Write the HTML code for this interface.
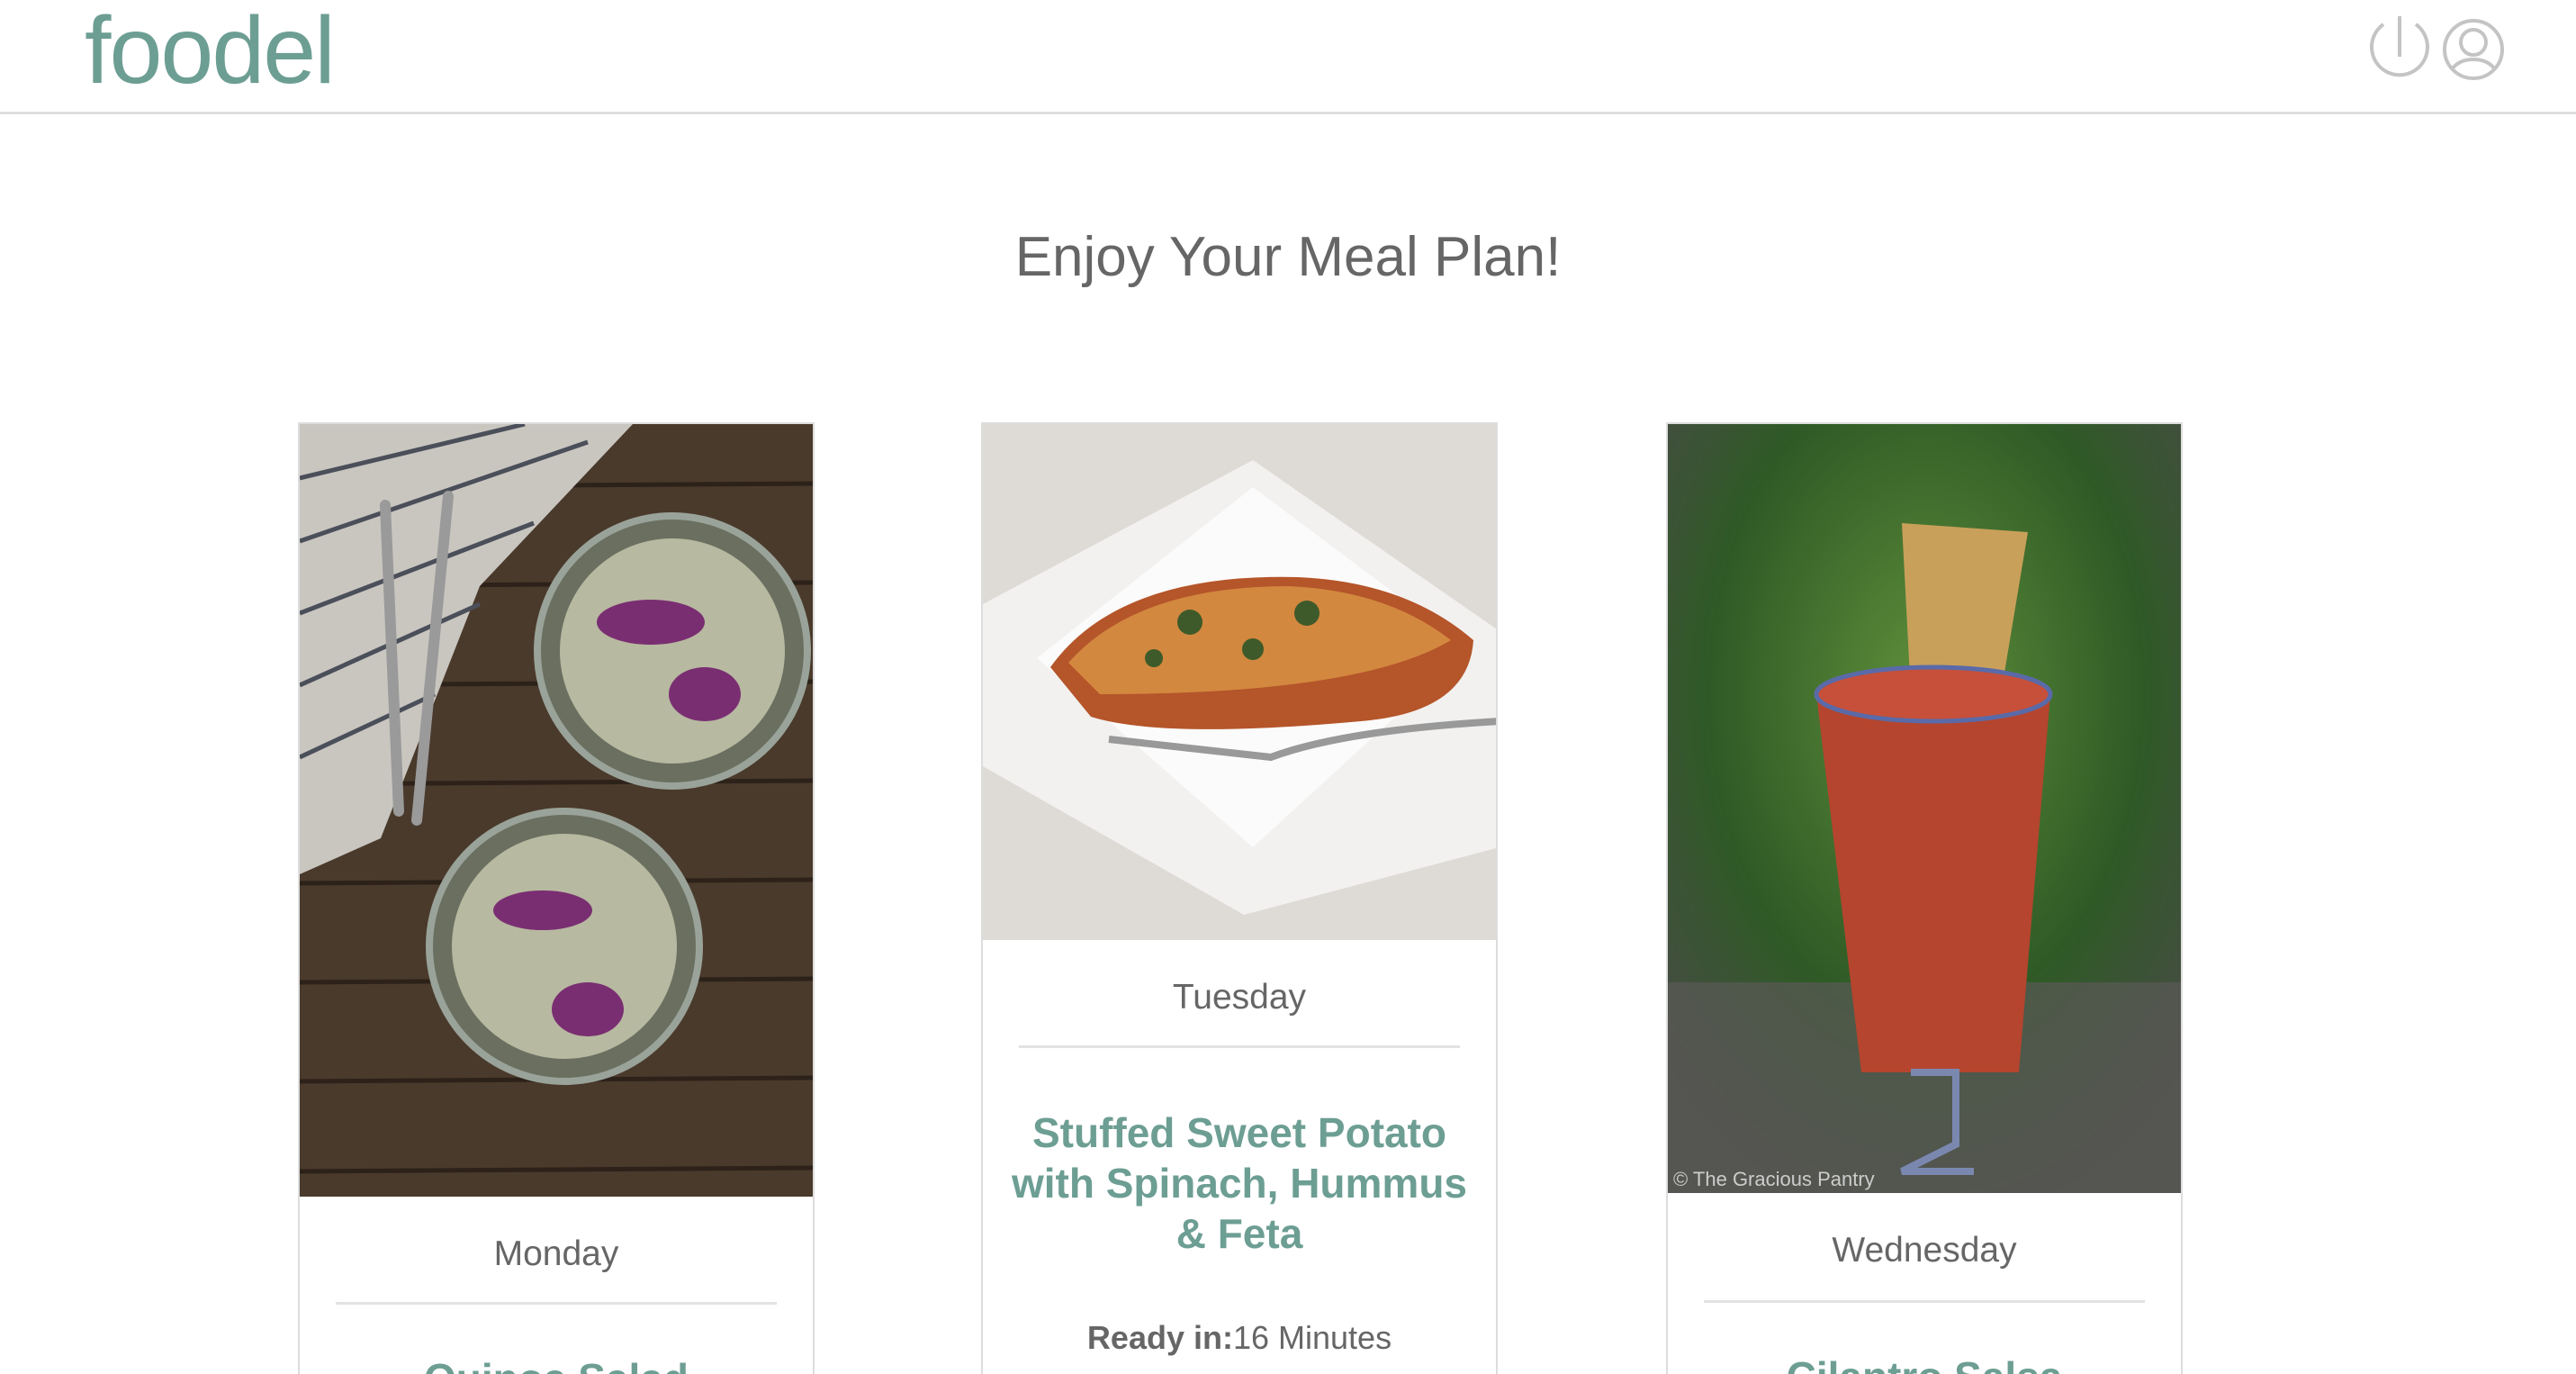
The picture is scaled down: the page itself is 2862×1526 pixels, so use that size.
<!DOCTYPE html>
<html style="overflow:hidden;width:2862px;height:1526px"><head><meta charset="utf-8"><style>
*{margin:0;padding:0;box-sizing:border-box}
body{width:2862px;height:1526px;overflow:hidden;background:#fff;font-family:"Liberation Sans",Arial,sans-serif;position:relative}
.hdr{position:absolute;left:0;top:0;width:2862px;height:127px;border-bottom:3px solid #dedede}
.logo{position:absolute;left:94px;top:-4px;font-size:106px;color:#6d9e93;letter-spacing:-2px;font-weight:normal}
h1{position:absolute;left:0;width:2862px;top:250px;text-align:center;font-size:62px;font-weight:normal;color:#666}
.card{position:absolute;top:469px;width:574px;height:1057px;border:2px solid #ddd;border-bottom:none;background:#fff;overflow:hidden}
.card svg{display:block}
.day{position:absolute;left:0;width:100%;text-align:center;font-size:39px;color:#666}
.div{position:absolute;left:40px;right:40px;height:3px;background:#e2e2e2}
.t{position:absolute;left:20px;right:20px;text-align:center;font-size:46px;line-height:56px;font-weight:bold;color:#6d9e93}
.ready{position:absolute;left:0;width:100%;text-align:center;font-size:36px;color:#666}
</style></head><body>
<div class="hdr">
<div class="logo">foodel</div>
<svg style="position:absolute;left:2620px;top:10px" width="180" height="95" viewBox="0 0 180 95">
<g fill="none" stroke="#c4c4c4" stroke-width="4">
<path d="M28 17 A31 31 0 1 0 64 17"/><line x1="46" y1="8" x2="46" y2="53"/>
<circle cx="128" cy="45" r="32"/><circle cx="128" cy="37" r="14"/>
<path d="M104 67 Q112 56 128 56 Q144 56 152 67"/>
</g></svg>
</div>
<h1>Enjoy Your Meal Plan!</h1>

<div class="card" style="left:331px">
<svg width="574" height="858" viewBox="0 0 574 858">
<rect width="574" height="858" fill="#4a3a2c"/>
<g stroke="#2d2219" stroke-width="5"><line x1="0" y1="70" x2="574" y2="66"/><line x1="0" y1="180" x2="574" y2="176"/><line x1="0" y1="290" x2="574" y2="286"/><line x1="0" y1="400" x2="574" y2="396"/><line x1="0" y1="510" x2="574" y2="506"/><line x1="0" y1="620" x2="574" y2="616"/><line x1="0" y1="730" x2="574" y2="726"/><line x1="0" y1="830" x2="574" y2="826"/></g>
<path d="M0 0 L370 0 L200 180 L90 460 L0 500Z" fill="#c9c6c0"/>
<g stroke="#4b4f5a" stroke-width="5" fill="none"><path d="M0 60 L250 0"/><path d="M0 130 L320 20"/><path d="M0 210 L260 110"/><path d="M0 290 L200 200"/><path d="M0 370 L150 300"/></g>
<g stroke="#9a9a9a" stroke-width="12" stroke-linecap="round"><line x1="95" y1="90" x2="110" y2="430"/><line x1="165" y1="80" x2="130" y2="440"/></g>
<circle cx="414" cy="252" r="150" fill="#6a6f60" stroke="#9aa399" stroke-width="8"/>
<circle cx="414" cy="252" r="125" fill="#b7b9a0"/>
<circle cx="294" cy="580" r="150" fill="#6a6f60" stroke="#9aa399" stroke-width="8"/>
<circle cx="294" cy="580" r="125" fill="#b7b9a0"/>
<g fill="#7a2e72"><ellipse cx="390" cy="220" rx="60" ry="25"/><ellipse cx="450" cy="300" rx="40" ry="30"/><ellipse cx="270" cy="540" rx="55" ry="22"/><ellipse cx="320" cy="650" rx="40" ry="30"/></g>
</svg>
<div class="day" style="top:900px">Monday</div>
<div class="div" style="top:975px"></div>
<div class="t" style="top:1032px">Quinoa Salad</div>
</div>

<div class="card" style="left:1090px">
<svg width="574" height="573" viewBox="0 0 574 573">
<rect width="574" height="573" fill="#dedbd7"/>
<path d="M300 40 L574 230 L574 470 L290 545 L0 380 L0 200Z" fill="#f2f1ef"/>
<path d="M300 70 L540 250 L300 470 L60 260Z" fill="#fbfbfb"/>
<path d="M75 270 Q150 165 350 170 Q470 175 545 240 Q540 320 420 330 Q200 350 120 325Z" fill="#b5552a"/>
<path d="M95 265 Q170 180 340 180 Q450 185 520 240 Q420 300 130 300Z" fill="#d2883f"/>
<g fill="#3e5a2a"><circle cx="230" cy="220" r="14"/><circle cx="300" cy="250" r="12"/><circle cx="360" cy="210" r="14"/><circle cx="190" cy="260" r="10"/></g>
<path d="M140 350 L320 370 Q400 340 574 330" stroke="#999" stroke-width="8" fill="none"/>
</svg>
<div class="day" style="top:615px">Tuesday</div>
<div class="div" style="top:690px"></div>
<div class="t" style="top:759px">Stuffed Sweet Potato with Spinach, Hummus &amp; Feta</div>
<div class="ready" style="top:994px"><b>Ready in:</b>16 Minutes</div>
</div>

<div class="card" style="left:1851px">
<svg width="574" height="854" viewBox="0 0 574 854">
<defs><radialGradient id="g" cx="0.5" cy="0.35" r="0.7"><stop offset="0" stop-color="#5e8f3a"/><stop offset="0.6" stop-color="#2f5a26"/><stop offset="1" stop-color="#4a4a48"/></radialGradient></defs>
<rect width="574" height="854" fill="url(#g)"/>
<rect y="620" width="574" height="234" fill="#5a5a55" opacity="0.7"/>
<path d="M260 110 L400 120 L370 300 L270 300Z" fill="#c9a05a"/>
<path d="M165 300 L425 300 L390 720 L215 720Z" fill="#b5452e"/>
<ellipse cx="295" cy="300" rx="130" ry="30" fill="#c7503a" stroke="#5a6aa8" stroke-width="5"/>
<path d="M270 720 L320 720 L320 800 L260 830 L340 830" stroke="#7a88b0" stroke-width="8" fill="none"/>
<text x="6" y="846" font-size="22" fill="#ccc" font-family="Liberation Sans">© The Gracious Pantry</text>
</svg>
<div class="day" style="top:896px">Wednesday</div>
<div class="div" style="top:973px"></div>
<div class="t" style="top:1030px">Cilantro Salsa</div>
</div>
</body></html>
